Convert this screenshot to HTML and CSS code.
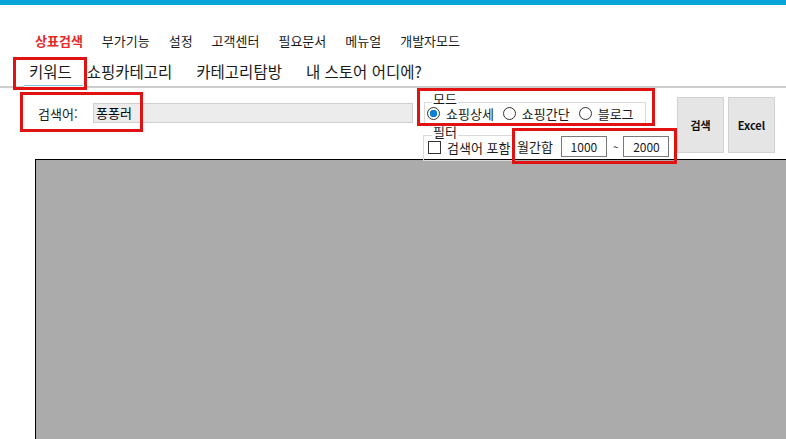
FILE: index.html
```html
<!DOCTYPE html>
<html lang="ko">
<head>
    <meta charset="UTF-8">
    <meta name="viewport" content="width=device-width, initial-scale=1.0">
    <title>상표검색</title>
    <link rel="stylesheet" href="styles.css">
</head>
<body>
    <div class="topbar"></div>

    <nav class="menu">
        <span class="menu-item active">상표검색</span>
        <span class="menu-item">부가기능</span>
        <span class="menu-item">설정</span>
        <span class="menu-item">고객센터</span>
        <span class="menu-item">필요문서</span>
        <span class="menu-item">메뉴얼</span>
        <span class="menu-item">개발자모드</span>
    </nav>

    <div class="tabs">
        <span class="tab selected">키워드</span>
        <span class="tab">쇼핑카테고리</span>
        <span class="tab">카테고리탐방</span>
        <span class="tab">내 스토어 어디에?</span>
    </div>

    <div class="toolbar">
        <div class="search">
            <label class="search-label">검색어:</label>
            <div class="search-input">퐁퐁러</div>
        </div>

        <div class="options">
            <div class="group mode">
                <div class="group-title">모드</div>
                <div class="radios">
                    <span class="radio checked"></span><span class="radio-text">쇼핑상세</span>
                    <span class="radio"></span><span class="radio-text">쇼핑간단</span>
                    <span class="radio"></span><span class="radio-text">블로그</span>
                </div>
            </div>
            <div class="filter-row">
                <div class="group filter">
                    <div class="group-title">필터</div>
                    <div class="check-row">
                        <span class="checkbox"></span><span>검색어 포함</span>
                    </div>
                </div>
                <div class="range">
                    <span class="range-label">월간합</span>
                    <span class="num">1000</span>
                    <span class="tilde">~</span>
                    <span class="num">2000</span>
                </div>
            </div>
        </div>

        <div class="buttons">
            <button class="btn">검색</button>
            <button class="btn">Excel</button>
        </div>
    </div>

    <div class="grid"></div>

    <!-- 강조 표시 -->
    <div class="mark mark-tab"></div>
    <div class="mark mark-search"></div>
    <div class="mark mark-mode"></div>
    <div class="mark mark-range"></div>
</body>
</html>
```

FILE: styles.css
```css
html, body {
    margin: 0;
    padding: 0;
}
body {
    position: relative;
    width: 786px;
    height: 439px;
    overflow: hidden;
    background-color: #fff;
    color: #1a1a1a;
    font-family: 'Noto Sans CJK KR', 'Noto Sans', sans-serif;
    font-size: 13px;
}
.topbar {
    height: 5px;
    background-color: #0aa5da;
}

/* 상단 메뉴 */
.menu {
    display: flex;
    gap: 19px;
    height: 20px;
    line-height: 20px;
    margin-top: 26px;
    padding-left: 35px;
    white-space: nowrap;
}
.menu-item.active {
    color: #e42a2a;
    font-weight: bold;
}

/* 탭 */
.tabs {
    display: flex;
    align-items: flex-end;
    height: 28px;
    margin-top: 7px;
    padding-left: 24px;
    border-bottom: 2px solid #cdcdcd;
    font-size: 15.5px;
}
.tab {
    height: 28px;
    line-height: 27px;
    padding: 0 12px;
    white-space: nowrap;
}
.tab.selected {
    padding: 0 11px 0 5px;
    margin-right: -8px;
    margin-bottom: -2px;
    border-bottom: 2px solid #fff;
    box-shadow: inset 0 -1px 0 #79c3e8;
}

/* 검색 영역 */
.toolbar {
    display: flex;
    align-items: flex-start;
    height: 71px;
}
.search {
    display: flex;
    align-items: center;
    margin: 15px 0 0 38px;
}
.search-label {
    width: 55px;
}
.search-input {
    box-sizing: border-box;
    width: 320px;
    height: 20px;
    line-height: 18px;
    padding-left: 2px;
    border: 1px solid #cfcfcf;
    background-color: #ececec;
    color: #000;
}
.options {
    width: 254px;
    margin-left: 10px;
    white-space: nowrap;
}
.group {
    box-sizing: border-box;
    border: 1px solid #dadada;
}
.group-title {
    width: fit-content;
    line-height: 12px;
    margin: -10px 0 0 7px;
    padding: 0 1px;
    background-color: #fff;
}
.mode {
    width: 222px;
    height: 23px;
    margin: 14px 0 0 1px;
}
.radios {
    display: flex;
    align-items: center;
    height: 13px;
    line-height: 13px;
    margin-top: 2px;
    padding-left: 2px;
}
.radio {
    box-sizing: border-box;
    width: 13px;
    height: 13px;
    border: 1px solid #333;
    border-radius: 50%;
    background-color: #fff;
    flex: none;
}
.radio.checked {
    background: radial-gradient(circle, #0a7fd4 0 3.5px, #fff 4px);
}
.radio-text {
    margin: 0 9px 0 6px;
}
.filter-row {
    display: flex;
    align-items: flex-start;
    margin-top: 10px;
}
.filter {
    width: 90px;
    height: 26px;
}
.filter .group-title {
    margin-left: 8px;
}
.check-row {
    display: flex;
    align-items: center;
    height: 13px;
    line-height: 13px;
    margin-top: 3px;
    padding-left: 4px;
}
.checkbox {
    box-sizing: border-box;
    width: 13px;
    height: 13px;
    border: 1px solid #333;
    background-color: #fff;
    margin-right: 6px;
}
.range {
    display: flex;
    align-items: center;
    height: 21px;
    margin: 1px 0 0 4px;
}
.range-label {
    margin-right: 8px;
}
.num {
    box-sizing: border-box;
    width: 46px;
    height: 21px;
    line-height: 19px;
    border: 1px solid #7a7a7a;
    text-align: center;
    font-size: 12px;
}
.tilde {
    margin: 0 5px 0 6px;
    font-size: 10px;
}
.buttons {
    display: flex;
    gap: 4px;
    margin-top: 9px;
}
.btn {
    box-sizing: border-box;
    width: 47px;
    height: 56px;
    padding: 0;
    border: 1px solid #d2d2d2;
    background-color: #e5e5e5;
    color: #111;
    font-family: 'Noto Sans CJK KR', 'Noto Sans', sans-serif;
    font-size: 11px;
    font-weight: bold;
}

/* 결과 영역 */
.grid {
    height: 300px;
    margin-left: 35px;
    border-top: 1px solid #000;
    border-left: 1px solid #000;
    background-color: #ababab;
}

/* 빨간 강조 박스 */
.mark {
    position: absolute;
    box-sizing: border-box;
    border: 3px solid #e01212;
    z-index: 2;
    pointer-events: none;
}
.mark-tab {
    left: 13px;
    top: 57px;
    width: 74px;
    height: 33px;
}
.mark-search {
    left: 20px;
    top: 92px;
    width: 123px;
    height: 40px;
}
.mark-mode {
    left: 417px;
    top: 88px;
    width: 238px;
    height: 38px;
}
.mark-range {
    left: 512px;
    top: 128px;
    width: 165px;
    height: 36px;
}
```
